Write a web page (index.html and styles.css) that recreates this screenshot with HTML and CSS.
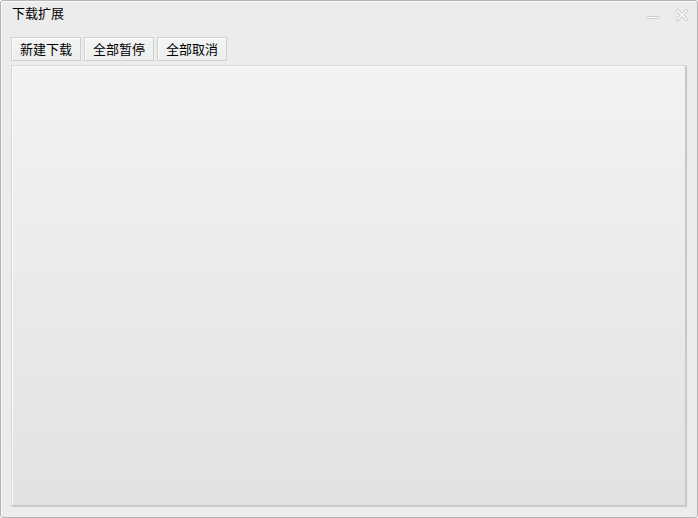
FILE: index.html
```html
<!DOCTYPE html>
<html lang="zh-CN">
<head>
<meta charset="utf-8">
<title>下载扩展</title>
<link rel="stylesheet" href="styles.css">
</head>
<body>
<div class="window">
  <div class="titlebar">
    <span class="title">下载扩展</span>
    <div class="controls">
      <span class="ctl min" title="最小化">
        <svg width="14" height="14" viewBox="0 0 14 14"><rect x="1" y="8.5" width="12" height="2" rx="1" fill="#ffffff" stroke="#c8c8c8" stroke-width="0.9"/></svg>
      </span>
      <span class="ctl close" title="关闭">
        <svg width="14" height="14" viewBox="0 0 14 14"><path d="M2.5 2.5 L11.5 11.5 M11.5 2.5 L2.5 11.5" stroke="#cacaca" stroke-width="3.2" stroke-linecap="round"/><path d="M2.5 2.5 L11.5 11.5 M11.5 2.5 L2.5 11.5" stroke="#ffffff" stroke-width="1.5" stroke-linecap="round"/></svg>
      </span>
    </div>
  </div>
  <div class="toolbar">
    <button class="btn">新建下载</button>
    <button class="btn">全部暂停</button>
    <button class="btn">全部取消</button>
  </div>
  <div class="panel"></div>
</div>
</body>
</html>
```
FILE: styles.css
```css
html, body {
  margin: 0;
  padding: 0;
  background: #ffffff;
}
.window {
  width: 698px;
  height: 518px;
  box-sizing: border-box;
  border: 1px solid #b4b4b4;
  border-radius: 3px;
  background: #ececec;
  box-shadow: inset 1px 1px 0 #fafafa;
  display: flex;
  flex-direction: column;
  padding: 0 10px 11px 10px;
  font-family: "Noto Sans CJK SC", "Noto Sans", sans-serif;
  color: #000;
}
.titlebar {
  height: 36px;
  display: flex;
  align-items: flex-start;
  justify-content: space-between;
  flex-shrink: 0;
}
.title {
  font-size: 13px;
  line-height: 13px;
  margin-top: 5px;
  margin-left: 1px;
}
.controls {
  display: flex;
  gap: 15px;
  margin-top: 7px;
  margin-right: -2px;
}
.ctl {
  width: 14px;
  height: 14px;
  display: block;
}
.ctl svg { display: block; }
.toolbar {
  display: flex;
  gap: 3px;
  height: 24px;
  flex-shrink: 0;
}
.btn {
  width: 70px;
  height: 24px;
  box-sizing: border-box;
  border: 1px solid #cdd1d1;
  background: linear-gradient(#f3f5f5, #eceeee);
  font-family: "Noto Sans CJK SC", "Noto Sans", sans-serif;
  font-size: 13px;
  line-height: 20px;
  color: #000;
  padding: 0;
  margin: 0;
  border-radius: 0;
  box-shadow: inset 1px 1px 0 #ffffff;
}
.panel {
  margin-top: 4px;
  width: 675px;
  height: 441px;
  box-sizing: border-box;
  border: 1px solid #d8d8d8;
  border-right-color: #c4c4c4;
  border-bottom-color: #c4c4c4;
  background: linear-gradient(#f3f3f3, #e2e2e2);
  box-shadow: 1px 1px 1px rgba(0,0,0,0.12), inset 1px 1px 0 #fbfbfb;
}
```
